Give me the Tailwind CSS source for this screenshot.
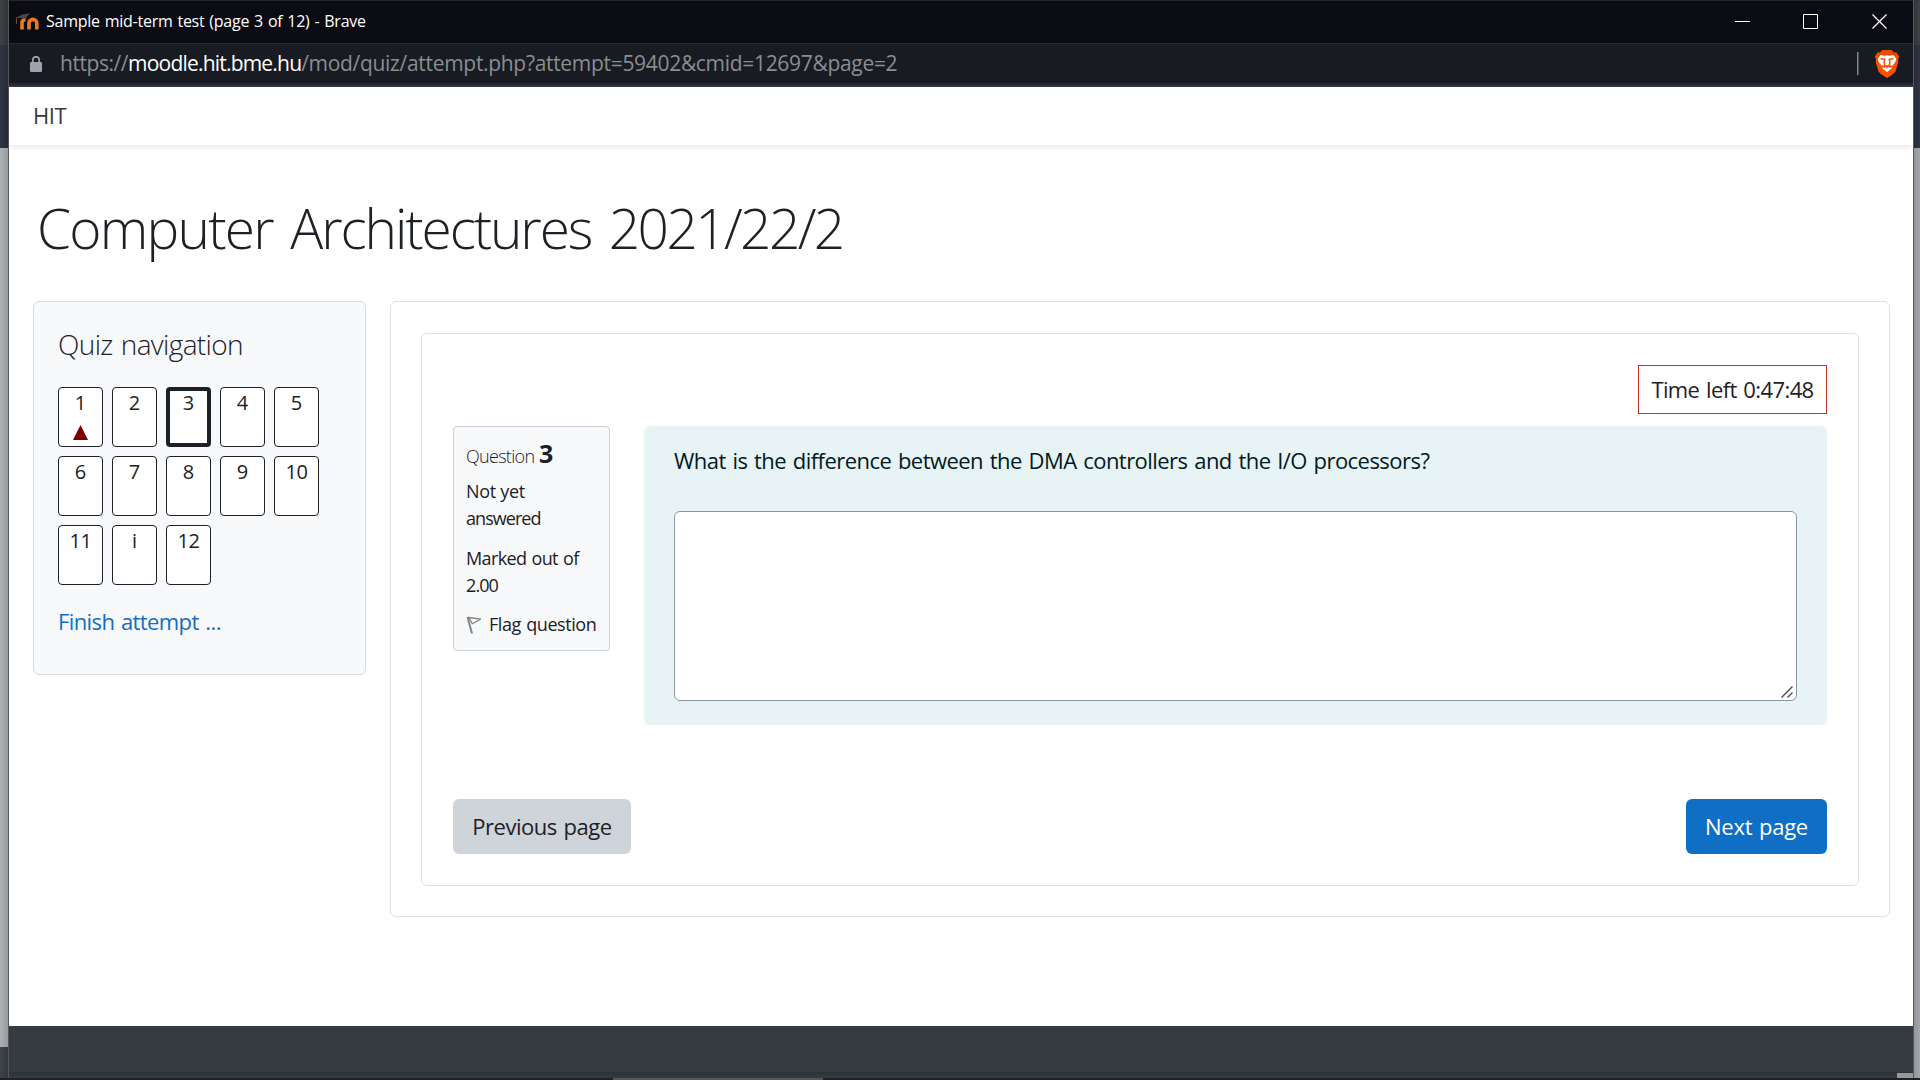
<!DOCTYPE html>
<html lang="en">
<head>
<meta charset="utf-8">
<title>Sample mid-term test (page 3 of 12)</title>
<script src="https://cdn.jsdelivr.net/npm/@tailwindcss/browser@4"></script>
</head>
<body class="relative flex h-[1080px] w-[1920px] flex-col overflow-hidden bg-[#1f2023] font-['Open_Sans',sans-serif] text-[22px] text-[#1d2125]">
  <div class="flex h-[1078px] w-full">
    <!-- strip of the desktop on the left -->
    <div class="flex w-[9px] shrink-0 flex-col border-r border-[#555759]">
      <div class="h-[45px] bg-linear-to-r from-[#404144] to-[#323335]"></div>
      <div class="h-[103px] bg-linear-to-r from-[#2f3445] to-[#272b39]"></div>
      <div class="h-[899px] bg-linear-to-r from-[#adb1b4] to-[#979b9e]"></div>
      <div class="grow bg-linear-to-r from-[#3f444c] to-[#33383e]"></div>
    </div>

    <div class="flex w-[1904px] shrink-0 flex-col bg-white">
      <header class="flex h-[43px] shrink-0 items-center border-t border-[#242526] bg-[#0b0b14] pb-px text-white">
        <svg class="ml-1.5 mt-px h-5 w-6 shrink-0" viewBox="0 0 24 20">
          <path d="M7 17.500V10.200q.3-2.500 3.500-2.400M14 17.500v-6.200a3.900 3.900 0 0 1 7.800 0v6.200" fill="none" stroke="#ec7a22" stroke-width="3.600"/>
          <path d="M0 6 8 2.200l7-.8-4.500 5.200-5-.6z" fill="#4a4648"/>
          <path d="M1.500 6v6" stroke="#6b4a38"/>
        </svg>
        <h1 class="ml-[7px] pb-0.5 text-base tracking-[-0.25px] [word-spacing:1px]">Sample mid-term test (page 3 of 12) - Brave</h1>
        <svg class="ml-auto mt-px h-4 w-4" viewBox="0 0 16 16" fill="none" stroke="#fff"><path d="M0 7.500h15"/></svg>
        <svg class="ml-[52px] mt-px h-4 w-4" viewBox="0 0 16 16" fill="none" stroke="#fff"><path d="M.5.5h14v14H.5z"/></svg>
        <svg class="mr-[25px] ml-[53px] mt-px h-4 w-4" viewBox="0 0 16 16" fill="none" stroke="#fff" stroke-width="1.200"><path d="m.5.5 14 14M14.500.5l-14 14"/></svg>
      </header>
      <div class="flex h-10 shrink-0 items-center border-t border-[#272b33] bg-[#181b22]">
        <svg class="ml-[21px] h-4 w-3" viewBox="0 0 12 16"><rect y="6" width="12" height="10" rx="1.300" fill="#9fa1ad"/><path d="M2.800 6.500V4a3.200 3.200 0 0 1 6.400 0v2.500" fill="none" stroke="#9fa1ad" stroke-width="1.700"/></svg>
        <div class="ml-[18px] whitespace-nowrap pt-px text-[21px] text-[#8b8d90]"><span class="tracking-[-0.44px]">https://</span><span class="tracking-[-0.8px] text-white">moodle.hit.bme.hu</span><span class="tracking-[-0.31px]">/mod/quiz/attempt.php?attempt=59402&amp;cmid=12697&amp;page=2</span></div>
        <div class="ml-auto h-[23px] w-0.5 border-l border-[#85878b] bg-[#4b4d52]"></div>
        <svg class="mr-3.5 ml-4 h-7 w-6" viewBox="0 0 24 28">
          <path d="M7.500 0h9l2.500 2.800 2.200-.3 2.800 4-1 3 .3 2.500-2.800 9.500-2 2.300L12 28l-6.500-4.200-2-2.300L.7 12 1 9.500 0 6.500l2.800-4 2.200.3z" fill="#ff5000"/>
          <path d="M7.500 0h9l2.500 2.800 2.200-.3 2.800 4H0l2.800-4 2.200.3z" fill="#e84a00"/>
          <path d="m5.500 5 4 .8L12 5.200l2.500.6 4-.8L21.300 9 20 12.500l-3.500 4.300.2 1.400-1.900 1.800L12 22l-2.800-2-1.900-1.800.2-1.400L4 12.500 2.700 9z" fill="#fff"/>
          <path d="M5.500 8.700 9.800 9.300 9 12.500l1 3.200-3 .8M18.500 8.700l-4.300.6.8 3.200-1 3.200 3 .8M8.500 17.300l3.500-1.500 3.500 1.500M12 15.800v2.700" fill="none" stroke="#ff5000" stroke-width="1.500"/>
        </svg>
      </div>
      <div class="h-1 shrink-0 border-t border-b-2 border-t-[#2a2b35] border-b-[#343548] bg-[#20212b]"></div>

      <nav class="flex h-[58px] shrink-0 items-center pb-0.5 pl-6 tracking-[-0.4px] text-[#343a40] shadow-[0_2px_6px_rgba(0,0,0,0.1)]">HIT</nav>

      <main class="flex h-[881px] shrink-0 flex-col">
        <h2 class="mt-[46px] ml-7 whitespace-nowrap text-[55px]/[74px] font-light tracking-[-1.8px] [word-spacing:5px]">Computer <span class="tracking-[-2.1px]">Architectures</span> <span class="tracking-[-2.6px]">2021/22/2</span></h2>
        <div class="mt-9 flex items-start gap-6 pl-6">
          <aside class="h-[374px] w-[333px] rounded-md border border-[#d8dadd] bg-[#f8f9fb] px-6 pt-[25px]">
            <h3 class="text-[28px]/[34px] font-light tracking-[-0.64px] [word-spacing:1.5px]">Quiz navigation</h3>
            <div class="mt-[26px] grid grid-cols-[repeat(5,45px)] gap-[9px] text-center text-xl/[30px]">
              <div class="relative h-[60px] rounded border border-[#1d2125] bg-white">1
                <svg class="absolute bottom-1.5 left-3.5 h-[15px] w-[15px]" viewBox="0 0 15 15"><path d="M7.500 0 15 15H0z" fill="#7d0000"/></svg>
              </div>
              <div class="h-[60px] rounded border border-[#1d2125] bg-white">2</div>
              <div class="h-[60px] rounded border-4 border-[#1d2125] bg-white leading-6">3</div>
              <div class="h-[60px] rounded border border-[#1d2125] bg-white">4</div>
              <div class="h-[60px] rounded border border-[#1d2125] bg-white">5</div>
              <div class="h-[60px] rounded border border-[#1d2125] bg-white">6</div>
              <div class="h-[60px] rounded border border-[#1d2125] bg-white">7</div>
              <div class="h-[60px] rounded border border-[#1d2125] bg-white">8</div>
              <div class="h-[60px] rounded border border-[#1d2125] bg-white">9</div>
              <div class="h-[60px] rounded border border-[#1d2125] bg-white tracking-[-0.5px]">10</div>
              <div class="h-[60px] rounded border border-[#1d2125] bg-white tracking-[-0.5px]">11</div>
              <div class="h-[60px] rounded border border-[#1d2125] bg-white">i</div>
              <div class="h-[60px] rounded border border-[#1d2125] bg-white tracking-[-0.5px]">12</div>
            </div>
            <a class="mt-[19px] block leading-[34px] tracking-[-0.6px] text-[#0f6fc5] [word-spacing:1.5px]">Finish attempt ...</a>
          </aside>

          <section class="h-[616px] w-[1500px] shrink-0 rounded-md border border-[#dee0e2] px-[30px] pt-[31px]">
            <div class="flex h-[553px] flex-col rounded-md border border-[#dee0e2] px-[31px] pt-[31px]">
              <div class="flex h-[49px] w-[189px] shrink-0 items-center justify-center self-end whitespace-nowrap border border-[#ca3120] tracking-[-0.6px] [word-spacing:1.5px]">Time left 0:47:48</div>
              <div class="mt-3 flex items-start justify-between">
                <div class="h-[225px] w-[157px] rounded-sm border border-[#cad0d7] bg-[#f8f9fb] px-3 pt-2.5 text-lg/[27px]">
                  <h4 class="h-8 leading-8"><span class="font-light tracking-[-0.7px]">Question</span> <span class="text-[25px] font-bold">3</span></h4>
                  <p class="mt-[9px] tracking-[-0.3px]">Not yet<br><span class="tracking-[-0.95px]">answered</span></p>
                  <p class="mt-[13px] tracking-[-0.62px] [word-spacing:1px]">Marked out of<br><span class="tracking-[-0.9px]">2.00</span></p>
                  <p class="mt-3 flex items-center whitespace-nowrap tracking-[-0.42px] [word-spacing:1px]">
                    <svg class="mr-2 h-[18px] w-[15px]" viewBox="0 0 15 18" fill="none" stroke="#858585"><path d="M1.500 1 6 17.500" stroke-width="2"/><path d="m3 1.500 11.500 1.700L6.300 7.700z" stroke-width="1.300"/></svg>Flag question</p>
                </div>
                <div class="h-[299px] w-[1183px] rounded-md bg-[#e7f3f5] px-[30px] pt-[17px]">
                  <p class="whitespace-nowrap leading-[34px] tracking-[-0.54px] text-[#001a1e] [word-spacing:1.5px]">What is the difference between the DMA controllers and the I/O processors?</p>
                  <div class="relative mt-[34px] h-[190px] w-[1123px] rounded-md border border-[#8f959e] bg-white">
                    <svg class="absolute right-[3px] bottom-0.5 h-3 w-3" viewBox="0 0 12 12" fill="none" stroke="#555" stroke-width="1.500"><path d="M.5 11.500 11.500.5M6.500 11.500l5-5"/></svg>
                  </div>
                </div>
              </div>
              <div class="mt-[74px] flex justify-between">
                <button class="h-[55px] w-[178px] rounded-md bg-[#ced4da] tracking-[-0.47px] [word-spacing:1.5px]">Previous page</button>
                <button class="h-[55px] w-[141px] rounded-md bg-[#0f6fc5] tracking-[-0.3px] text-white [word-spacing:1.5px]">Next page</button>
              </div>
            </div>
          </section>
        </div>
      </main>
      <footer class="h-[47px] shrink-0 border-b border-[#2c3236] bg-[#363a41]"></footer>
      <div class="flex grow justify-end bg-linear-to-b from-[#2d3438] to-[#353b42]"><div class="w-4 bg-[#96999c]"></div></div>
    </div>

    <!-- strip of the desktop on the right -->
    <div class="flex w-[7px] shrink-0 flex-col border-l border-[#555759]">
      <div class="h-[45px] bg-linear-to-r from-[#323335] to-[#404144]"></div>
      <div class="h-[103px] bg-linear-to-r from-[#272b39] to-[#2f3445]"></div>
      <div class="grow bg-linear-to-r from-[#929599] to-[#a3a6aa]"></div>
    </div>
  </div>
  <div class="ml-[613px] h-0.5 w-[210px] bg-[#555759]"></div>
</body>
</html>
